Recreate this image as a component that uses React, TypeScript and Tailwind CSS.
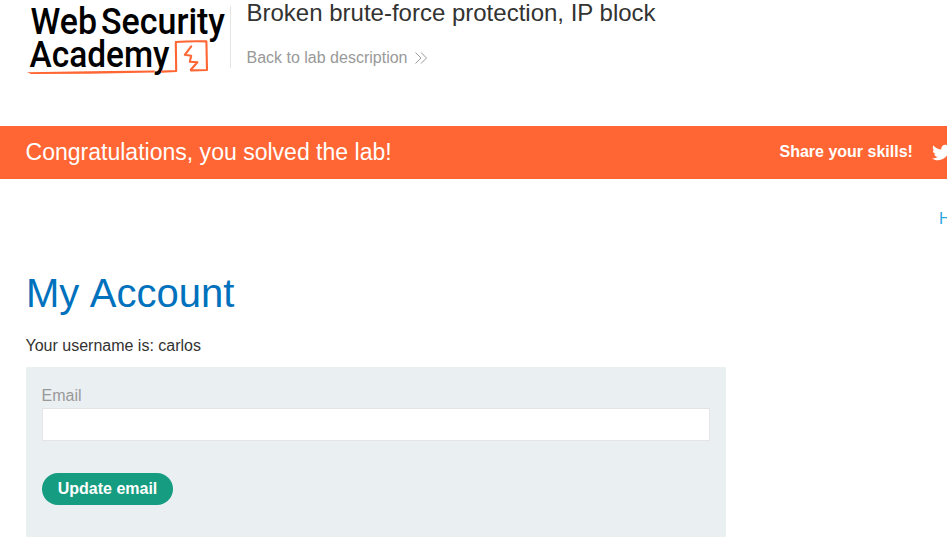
import React from "react";
import { FaTwitter } from "react-icons/fa";

function Logo() {
  return (
    <svg
      className="block h-[80px] w-[204px] shrink-0 overflow-visible"
      viewBox="26 0 204 80"
      role="img"
      aria-label="Web Security Academy"
    >
      <g fill="#000" fontFamily="Roboto, sans-serif" fontWeight="500" fontSize="37">
        <text x="30.5" y="34" textLength="66.5" lengthAdjust="spacingAndGlyphs">Web</text>
        <text x="101" y="34" textLength="124" lengthAdjust="spacingAndGlyphs">Security</text>
        <text x="29.5" y="67" textLength="140" lengthAdjust="spacingAndGlyphs">Academy</text>
      </g>
      <g fill="none" stroke="#ff6633" strokeLinecap="round" strokeLinejoin="round">
        <path d="M162 71.6 L176.2 71 L175.8 42 Q190 41 206.4 41.4 L207 70 L191 70.4" strokeWidth="2.1" />
        <path d="M191.2 46.3 L184.8 54.8 L191.2 55.8 L189.8 61.8 L197.4 62.2 L190.8 69.8" strokeWidth="2.1" />
      </g>
      <path d="M27 72.2 L90 71.2 L155 70.6 L154 72.6 L90 73.7 L31 74 Z" fill="#ff6633" />
    </svg>
  );
}

function Chevrons() {
  return (
    <svg className="ml-2 block h-3 w-3" viewBox="0 0 12 12" fill="none" stroke="#999" strokeWidth="1">
      <path d="M0.5 0.5 L6 6 L0.5 11.5 M6 0.5 L11.5 6 L6 11.5" />
    </svg>
  );
}

export default function App() {
  return (
    <div className="h-[549px] w-full overflow-hidden bg-white font-['Liberation_Sans',Arial,sans-serif] text-base text-[#333332]">
      <header className="flex h-[126px] items-start pl-[26px]">
        <Logo />
        <div className="mt-[6px] h-[62px] w-px bg-[#e4e4e4]" />
        <div className="ml-[15.5px]">
          <h2 className="-mt-[1px] text-[24px] leading-[28px]">Broken brute-force protection, IP block</h2>
          <a className="mt-[22px] flex items-center leading-[18px] text-[#999]">
            Back to lab description
            <Chevrons />
          </a>
        </div>
      </header>

      <section className="flex h-[53px] items-center justify-between overflow-hidden bg-[#ff6633] pb-px pl-[25.5px] text-white">
        <p className="text-[23.04px] leading-[28px]">Congratulations, you solved the lab!</p>
        <div className="flex w-[167.5px] shrink-0 items-center">
          <span className="shrink-0 pb-px font-bold leading-[18px]">Share your skills!</span>
          <FaTwitter className="ml-[19px] size-[19px] shrink-0" />
        </div>
      </section>

      <nav className="flex h-[94px] justify-end overflow-hidden pt-[31px]">
        <a className="w-[8px] overflow-hidden whitespace-nowrap leading-[18px] text-[#29a7df]">Home</a>
      </nav>

      <main className="pl-[26px]">
        <h1 className="h-[64px] text-[40px] leading-[40px] text-[#0071bc] [word-spacing:1.5px]">My Account</h1>
        <p className="-ml-[0.5px] h-[30px] leading-[18px]">Your username is: carlos</p>
        <form className="h-[170px] w-[700px] bg-[#eaeff2] px-4 pt-5">
          <label className="-ml-[0.5px] block h-[21px] leading-[18px] text-[#999]">Email</label>
          <input className="block h-[33px] w-full border border-[#e4e4e4] bg-white px-2 outline-none" type="email" />
          <button
            type="button"
            className="mt-8 flex h-8 w-[131px] items-center justify-center rounded-full bg-[#169c80] font-bold text-white"
          >
            Update email
          </button>
        </form>
      </main>
    </div>
  );
}
